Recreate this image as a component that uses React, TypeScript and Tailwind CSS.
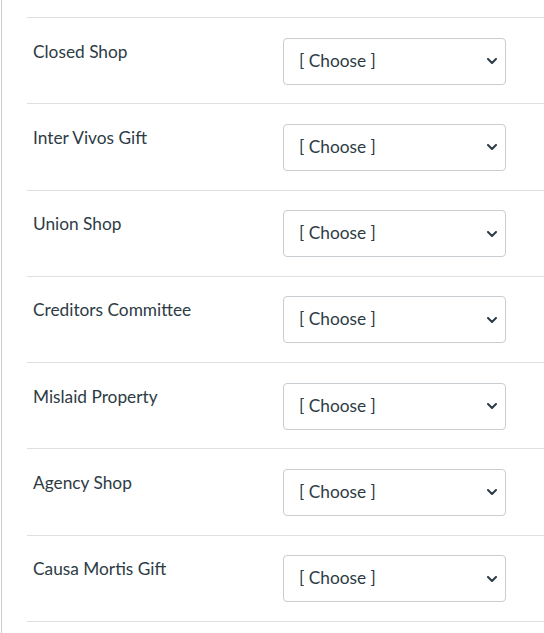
import React from "react";

const items = [
  "Closed Shop",
  "Inter Vivos Gift",
  "Union Shop",
  "Creditors Committee",
  "Mislaid Property",
  "Agency Shop",
  "Causa Mortis Gift",
];

function Chevron() {
  return (
    <svg width="10" height="6" viewBox="0 0 10 6" className="pointer-events-none absolute right-[9px] top-1/2 -translate-y-1/2">
      <path d="M1 1 L5 5 L9 1" fill="none" stroke="#2d3b45" strokeWidth="2" strokeLinecap="round" strokeLinejoin="round" />
    </svg>
  );
}

export default function App() {
  return (
    <div className="min-h-[633px] w-[544px] bg-white" style={{ fontFamily: "Lato, 'Open Sans', sans-serif" }}>
      <div className="ml-px min-h-[633px] border-l border-[#c7cdd1] pl-[25px] pt-[17px]">
        <div className="border-b border-[#dddfe1]">
          {items.map((label) => (
            <div key={label} className="flex h-[86.28px] items-start border-t border-[#dddfe1]">
              <div className="w-[256px] pl-[6px] pt-[21.5px] text-[17.3px] font-normal leading-[24px] text-[#2d3b45]">{label}</div>
              <div className="relative mt-[19.6px] h-[47px] w-[223px]">
                <select className="h-full w-full appearance-none rounded-[4px] border border-[#c7cdd1] bg-white pl-[15px] pb-[1px] text-[17.3px] font-normal text-[#2d3b45] outline-none" style={{ fontFamily: "Lato, sans-serif" }}>
                  <option>[ Choose ]</option>
                </select>
                <Chevron />
              </div>
            </div>
          ))}
        </div>
      </div>
    </div>
  );
}
